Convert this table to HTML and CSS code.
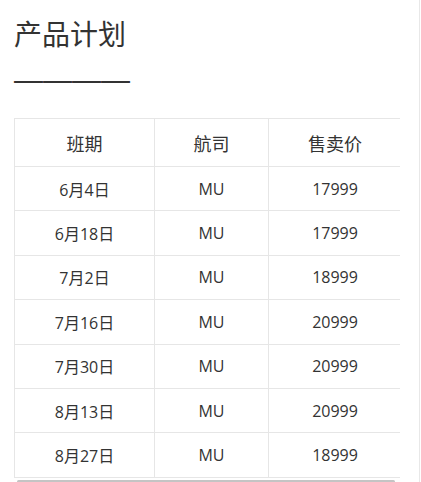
FILE: index.html
```html
<!DOCTYPE html>
<html lang="zh">
<head>
<meta charset="utf-8">
<link rel="stylesheet" href="styles.css">
</head>
<body>
<div class="page">
  <h1 class="title">产品计划</h1>
  <div class="dash">————</div>
  <div class="table-scroll">
    <table class="plan">
      <thead>
        <tr><th class="c1">班期</th><th class="c2">航司</th><th class="c3">售卖价</th></tr>
      </thead>
      <tbody>
        <tr><td>6月4日</td><td>MU</td><td>17999</td></tr>
        <tr><td>6月18日</td><td>MU</td><td>17999</td></tr>
        <tr><td>7月2日</td><td>MU</td><td>18999</td></tr>
        <tr><td>7月16日</td><td>MU</td><td>20999</td></tr>
        <tr><td>7月30日</td><td>MU</td><td>20999</td></tr>
        <tr><td>8月13日</td><td>MU</td><td>20999</td></tr>
        <tr><td>8月27日</td><td>MU</td><td>18999</td></tr>
      </tbody>
    </table>
  </div>
  <div class="scrollbar"></div>
</div>
</body>
</html>
```

FILE: styles.css
```css
html, body {
  margin: 0;
  padding: 0;
  background: #fff;
}
body {
  font-family: "Open Sans", "Noto Sans CJK SC", sans-serif;
  color: #333;
}
.page {
  width: 420px;
  height: 482px;
  box-sizing: border-box;
  border-right: 1px solid #e8e8e8;
  padding: 0 0 0 14px;
  overflow: hidden;
}
.title {
  margin: 0;
  padding-top: 13px;
  font-size: 28px;
  font-weight: normal;
  line-height: 40px;
  color: #333;
  font-family: "Noto Sans CJK SC", sans-serif;
}
.dash {
  font-family: "Liberation Sans", sans-serif;
  font-size: 29px;
  line-height: 40px;
  height: 40px;
  color: #333;
  margin-top: 7px;
}
.table-scroll {
  width: 386px;
  overflow: hidden;
  margin-top: 18px;
}
.plan {
  border-collapse: collapse;
  width: 388px;
  table-layout: fixed;
}
.plan th, .plan td {
  border: 1px solid #e6e6e6;
  text-align: center;
  padding: 0;
  font-weight: normal;
  color: #333;
}
.plan th {
  font-size: 18px;
  height: 47px;
  font-family: "Noto Sans CJK SC", sans-serif;
}
.plan td {
  font-size: 16px;
  height: 43.4px;
}
.c1 { width: 139px; }
.c2 { width: 113px; }
.scrollbar {
  width: 378px;
  height: 3px;
  margin: 2px 0 0 3px;
  background: #c4c4c4;
  border-radius: 2px;
}
```
